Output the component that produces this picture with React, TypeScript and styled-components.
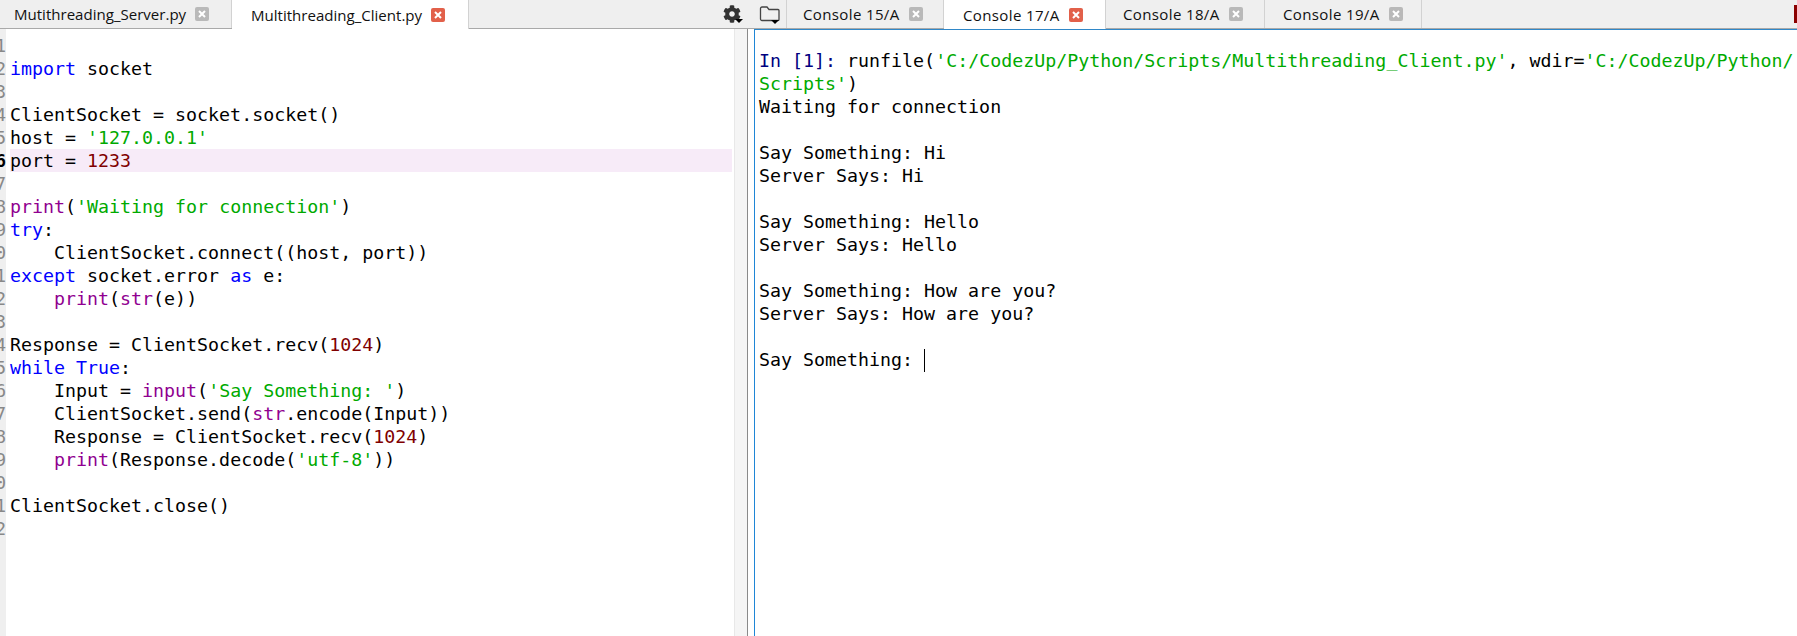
import React from 'react';
import styled, { createGlobalStyle } from 'styled-components';
import { FaCog } from 'react-icons/fa';

const Global = createGlobalStyle`
  html, body { margin: 0; padding: 0; background: #fff; overflow: hidden; }
`;
const Page = styled.div`
  width: 1797px; height: 636px; display: grid; grid-template-columns: 748px 1fr; overflow: hidden;
  background: #fff;
`;
const Pane = styled.div`display: flex; flex-direction: column; min-width: 0; height: 636px;`;
const TabBar = styled.div`
  height: 28px; flex: none; display: flex; background: #efefef; border-bottom: 1px solid #a9a9a9;
  font: 15.05px "Open Sans", "Liberation Sans", sans-serif; color: #111;
`;
const Tab = styled.div<{ $active?: boolean; $w: number; $pl: number }>`
  width: ${p => p.$w}px; padding-left: ${p => p.$pl}px; box-sizing: border-box; display: flex; align-items: center; gap: 9px;
  height: ${p => p.$active ? 29 : 28}px;
  background: ${p => p.$active ? '#fff' : 'transparent'};
  border-right: 1px solid #d2d2d2; white-space: nowrap;
`;
const ConsoleTab = styled(Tab)`letter-spacing: 0.35px;`;
const Close = styled.span<{ $active?: boolean }>`
  width: 14px; height: 14px; border-radius: 2px; flex: none; display: flex; align-items: center; justify-content: center;
  background: ${p => p.$active ? '#e2604a' : '#b9b9b9'};
  svg { display: block; }
`;
const Icon = () => (
  <svg width="8" height="8" viewBox="0 0 8 8"><path d="M1 1L7 7M7 1L1 7" stroke="#fff" strokeWidth="2" /></svg>
);
const Gear = styled.div`
  margin-left: auto; margin-right: 5px; width: 20px; height: 28px; flex: none; position: relative;
  display: flex; align-items: center; color: #333;
`;
const GearArrow = styled.span`
  position: absolute; right: 0; top: 19px; width: 0; height: 0;
  border-left: 4px solid transparent; border-right: 4px solid transparent; border-top: 4px solid #000;
`;
const EditorRow = styled.div`flex: 1; display: flex; min-height: 0;`;
const Editor = styled.div`
  width: 734px; flex: none; display: flex; flex-direction: column; padding-top: 5px; background: #fff;
  background-image: linear-gradient(#efefef, #efefef); background-size: 6px 100%; background-repeat: no-repeat;
`;
const Grip = styled.div`
  flex: 1; background: #f5f5f5; border-left: 1px solid #e8e8e8; border-right: 1px solid #8a8a8a;
`;
const mono = `font: 18.3px/23px "DejaVu Sans Mono", "Liberation Mono", monospace; white-space: pre;`;
const Row = styled.div<{ $hl?: boolean }>`
  display: flex; width: 732px; height: 23px; ${mono} color: #000;
  background: ${p => p.$hl ? 'linear-gradient(90deg, transparent 10px, #f7ebf8 10px)' : 'transparent'};
`;
const Num = styled.span<{ $cur?: boolean }>`
  width: 6px; flex: none; margin-right: 4px; overflow: hidden; direction: rtl; text-align: right;
  font: 18px/23px "DejaVu Sans Mono", monospace; color: ${p => p.$cur ? '#000' : '#888'}; font-weight: ${p => p.$cur ? 700 : 400};
`;
const K = styled.span`color: #0000ff;`;
const S = styled.span`color: #00aa00;`;
const B = styled.span`color: #900090;`;
const D = styled.span`color: #800000;`;
const N = styled.span`color: #000080;`;
const Console = styled.div`
  flex: 1; margin-left: 6px; border-left: 1px solid #1f86d6; border-top: 1px solid #2f87c8;
  padding: 19px 0 0 4px; ${mono} color: #000;
`;
const Caret = styled.span`display: inline-block; width: 1px; height: 23px; background: #000; vertical-align: -6px;`;
const Marker = styled.div`
  margin: 5px 0 0 auto; width: 3px; height: 18px; background: #8b0000;
`;

const lines: React.ReactNode[] = [
  '',
  <><K>import</K> socket</>,
  '',
  'ClientSocket = socket.socket()',
  <>host = <S>'127.0.0.1'</S></>,
  <>port = <D>1233</D></>,
  '',
  <><B>print</B>(<S>'Waiting for connection'</S>)</>,
  <><K>try</K>:</>,
  '    ClientSocket.connect((host, port))',
  <><K>except</K> socket.error <K>as</K> e:</>,
  <>    <B>print</B>(<B>str</B>(e))</>,
  '',
  <>Response = ClientSocket.recv(<D>1024</D>)</>,
  <><K>while</K> <K>True</K>:</>,
  <>    Input = <B>input</B>(<S>'Say Something: '</S>)</>,
  <>    ClientSocket.send(<B>str</B>.encode(Input))</>,
  <>    Response = ClientSocket.recv(<D>1024</D>)</>,
  <>    <B>print</B>(Response.decode(<S>'utf-8'</S>))</>,
  '',
  'ClientSocket.close()',
  '',
];

export default function App() {
  return (
    <Page>
      <Global />
      <Pane>
        <TabBar>
          <Tab $w={232} $pl={14}>Mutithreading_Server.py<Close><Icon /></Close></Tab>
          <Tab $active $w={237} $pl={19}>Multithreading_Client.py<Close $active><Icon /></Close></Tab>
          <Gear><FaCog size={18} /><GearArrow /></Gear>
        </TabBar>
        <EditorRow>
          <Editor>
            {lines.map((l, i) => (
              <Row key={i} $hl={i === 5}>
                <Num $cur={i === 5}>{i + 1}</Num>
                <span>{l}</span>
              </Row>
            ))}
          </Editor>
          <Grip />
        </EditorRow>
      </Pane>
      <Pane>
        <TabBar>
          <Tab $w={39} $pl={10}>
            <svg width="24" height="20" viewBox="0 0 24 20">
              <path d="M2.5 4.5a1.5 1.5 0 0 1 1.5-1.5h5l2 2.5h9a1 1 0 0 1 1 1v9a1 1 0 0 1-1 1h-16a1.5 1.5 0 0 1-1.5-1.5z" fill="none" stroke="#444" strokeWidth="1.3" />
              <path d="M13 16h8l-4 4z" fill="#000" />
            </svg>
          </Tab>
          <ConsoleTab $w={157} $pl={16}>Console 15/A<Close><Icon /></Close></ConsoleTab>
          <ConsoleTab $active $w={162} $pl={19}>Console 17/A<Close $active><Icon /></Close></ConsoleTab>
          <ConsoleTab $w={159} $pl={17}>Console 18/A<Close><Icon /></Close></ConsoleTab>
          <ConsoleTab $w={157} $pl={18}>Console 19/A<Close><Icon /></Close></ConsoleTab>
          <Marker />
        </TabBar>
        <Console>
          <div><N>In [</N><N>1</N><N>]:</N> runfile(<S>'C:/CodezUp/Python/Scripts/Multithreading_Client.py'</S>, wdir=<S>'C:/CodezUp/Python/</S></div>
          <div><S>Scripts'</S>)</div>
          <div>Waiting for connection</div>
          <div>&nbsp;</div>
          <div>Say Something: Hi</div>
          <div>Server Says: Hi</div>
          <div>&nbsp;</div>
          <div>Say Something: Hello</div>
          <div>Server Says: Hello</div>
          <div>&nbsp;</div>
          <div>Say Something: How are you?</div>
          <div>Server Says: How are you?</div>
          <div>&nbsp;</div>
          <div>Say Something: <Caret /></div>
        </Console>
      </Pane>
    </Page>
  );
}
